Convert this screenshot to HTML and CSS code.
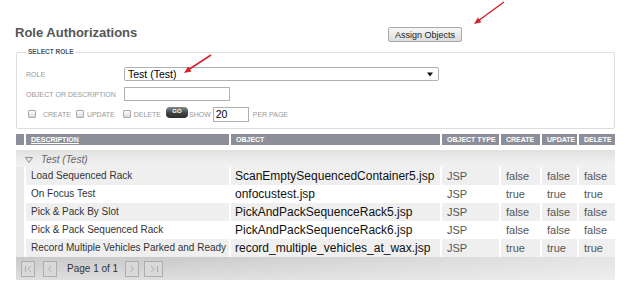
FILE: index.html
```html
<!DOCTYPE html>
<html>
<head>
<meta charset="utf-8">
<title>Role Authorizations</title>
<link rel="stylesheet" href="styles.css">
</head>
<body>
<div class="page">
  <div class="top">
    <h1 class="title">Role Authorizations</h1>
    <button class="btn-assign">Assign Objects</button>
  </div>

  <fieldset class="filter">
    <legend>SELECT ROLE</legend>
    <div class="rows">
      <div class="frow">
        <span class="flabel">ROLE</span>
        <div class="select"><span>Test (Test)</span><svg class="caret" width="6" height="5" viewBox="0 0 6 5"><path d="M0 0.5 H6 L3 4.5 Z" fill="#111"/></svg></div>
      </div>
      <div class="frow">
        <span class="flabel">OBJECT OR DESCRIPTION</span>
        <div class="tinput wide"></div>
      </div>
      <div class="frow opts">
        <span class="cb cb1"></span><span class="olabel l1">CREATE</span>
        <span class="cb cb2"></span><span class="olabel l2">UPDATE</span>
        <span class="cb cb3"></span><span class="olabel l3">DELETE</span>
        <span class="go">GO</span>
        <span class="olabel l4">SHOW</span>
        <div class="tinput num">20</div>
        <span class="olabel l5">PER PAGE</span>
      </div>
    </div>
  </fieldset>

  <div class="tbl">
    <div class="hrow">
      <div></div>
      <div class="u">DESCRIPTION</div>
      <div>OBJECT</div>
      <div>OBJECT TYPE</div>
      <div>CREATE</div>
      <div>UPDATE</div>
      <div>DELETE</div>
    </div>
    <div class="group">
      <svg class="tri" width="8" height="6" viewBox="0 0 8 6"><path d="M0.5 0.5 H7.5 L4 5.5 Z" fill="none" stroke="#8a8a8a" stroke-width="1"/></svg>
      <span>Test (Test)</span>
    </div>
    <div class="drow alt">
      <div class="c0"></div><div class="desc">Load Sequenced Rack</div><div class="obj">ScanEmptySequencedContainer5.jsp</div><div class="sm">JSP</div><div class="sm">false</div><div class="sm">false</div><div class="sm">false</div>
    </div>
    <div class="drow">
      <div class="c0"></div><div class="desc">On Focus Test</div><div class="obj">onfocustest.jsp</div><div class="sm">JSP</div><div class="sm">true</div><div class="sm">true</div><div class="sm">true</div>
    </div>
    <div class="drow alt">
      <div class="c0"></div><div class="desc">Pick &amp; Pack By Slot</div><div class="obj">PickAndPackSequenceRack5.jsp</div><div class="sm">JSP</div><div class="sm">false</div><div class="sm">false</div><div class="sm">false</div>
    </div>
    <div class="drow">
      <div class="c0"></div><div class="desc">Pick &amp; Pack Sequenced Rack</div><div class="obj">PickAndPackSequenceRack6.jsp</div><div class="sm">JSP</div><div class="sm">false</div><div class="sm">false</div><div class="sm">false</div>
    </div>
    <div class="drow alt">
      <div class="c0"></div><div class="desc">Record Multiple Vehicles Parked and Ready</div><div class="obj">record_multiple_vehicles_at_wax.jsp</div><div class="sm">JSP</div><div class="sm">true</div><div class="sm">true</div><div class="sm">true</div>
    </div>
  </div>

  <div class="pager">
    <span class="pbtn p1"><svg width="12" height="14" viewBox="0 0 12 14"><path d="M3.5 4 V10 M9 4 L6 7 L9 10" fill="none" stroke="#acacac" stroke-width="1"/></svg></span>
    <span class="pbtn p2"><svg width="12" height="14" viewBox="0 0 12 14"><path d="M7.5 4 L4.5 7 L7.5 10" fill="none" stroke="#acacac" stroke-width="1"/></svg></span>
    <span class="ptext">Page 1 of 1</span>
    <span class="pbtn p3"><svg width="12" height="14" viewBox="0 0 12 14"><path d="M4.5 4 L7.5 7 L4.5 10" fill="none" stroke="#acacac" stroke-width="1"/></svg></span>
    <span class="pbtn p4"><svg width="16" height="14" viewBox="0 0 16 14"><path d="M5 4 L8 7 L5 10 M11.5 4 V10" fill="none" stroke="#acacac" stroke-width="1"/></svg></span>
  </div>
</div>

<svg class="annot" width="628" height="296" viewBox="0 0 628 296">
  <line x1="504" y1="2" x2="478" y2="21" stroke="#d3232a" stroke-width="1.5"/>
  <polygon points="474,24 481.4,22.3 477.9,17.5" fill="#d3232a"/>
  <line x1="211" y1="55" x2="188" y2="70" stroke="#d3232a" stroke-width="1.5"/>
  <polygon points="184,73 191.5,71.6 188.1,66.6" fill="#d3232a"/>
</svg>
</body>
</html>
```

FILE: styles.css
```css
* { box-sizing: border-box; }

body {
  margin: 0;
  font-family: "Liberation Sans", Arial, sans-serif;
  background: #fff;
  color: #333;
}

.page {
  width: 615px;
  padding-left: 16px;
}

.top {
  display: grid;
  grid-template-columns: 372px auto;
  align-items: start;
  height: 41px;
  padding-top: 25px;
}

.title {
  margin: 0 0 0 -1px;
  font-size: 13px;
  font-weight: bold;
  line-height: 15px;
  color: #555;
}

.btn-assign {
  margin-top: 2px;
  width: 74px;
  height: 15px;
  padding: 0;
  font-family: "Liberation Sans", Arial, sans-serif;
  font-size: 9px;
  color: #222;
  border: 1px solid #a8a8a8;
  border-radius: 2px;
  background: linear-gradient(#f7f7f7, #dcdcdc);
}

/* filter fieldset */
.filter {
  margin: 7px 0 0;
  padding: 0 0 4px 9px;
  width: 599px;
  min-width: 0;
  border: 1px solid #dddddd;
  border-radius: 2px;
}

.filter legend {
  padding: 0 2px;
  font-size: 6.5px;
  line-height: 8px;
  font-weight: bold;
  color: #4a5866;
}

.rows {
  margin-top: 8px;
}

.frow {
  display: flex;
  align-items: center;
  height: 20px;
}

.flabel {
  width: 98px;
  font-size: 7px;
  color: #999;
}

.select {
  width: 315px;
  height: 14px;
  border: 1px solid #b0b0b0;
  border-radius: 2px;
  display: flex;
  align-items: center;
  justify-content: space-between;
  padding: 0 5px 0 3px;
  font-size: 10.5px;
  color: #000;
  background: #fff;
}

.tinput {
  height: 14px;
  border: 1px solid #b0b0b0;
  background: #fff;
}

.tinput.wide {
  width: 106px;
}

.tinput.num {
  width: 36px;
  height: 15px;
  margin-left: 2px;
  font-size: 10.5px;
  line-height: 13px;
  padding-left: 2px;
  color: #000;
}

.cb {
  width: 8px;
  height: 8px;
  border: 1px solid #a9a9a9;
  border-radius: 1px;
  background: linear-gradient(#ffffff, #d9d9d9);
}

.cb1 { margin-left: 2px; }
.cb2 { margin-left: 5px; }
.cb3 { margin-left: 8px; }

.olabel {
  font-size: 7px;
  color: #999;
  white-space: nowrap;
}

.l1 { margin-left: 7px; }
.l2 { margin-left: 3px; }
.l3 { margin-left: 3px; }
.l4 { margin-left: 1px; }
.l5 { margin-left: 4px; }

.go {
  margin-left: 5px;
  width: 22px;
  height: 11px;
  margin-top: -4px;
  border-radius: 4px;
  background: linear-gradient(#8a8a8a, #3e3e3e 60%, #2e2e2e);
  color: #fff;
  font-size: 6px;
  font-weight: bold;
  line-height: 8px;
  text-align: center;
}

/* table */
.tbl {
  margin-top: 5px;
  width: 599px;
}

.hrow,
.drow {
  display: grid;
  grid-template-columns: 8px 203px 209px 57px 39px 35px 36px;
  column-gap: 2px;
}

.hrow {
  height: 11px;
}

.hrow > div {
  background: #8c8f99;
  color: #fff;
  font-size: 7px;
  font-weight: bold;
  line-height: 11px;
  padding-left: 5px;
  white-space: nowrap;
  overflow: hidden;
}

.hrow .u {
  text-decoration: underline;
}

.group {
  margin-top: 5px;
  height: 17px;
  display: flex;
  align-items: center;
  padding: 2px 0 0 9px;
  background: linear-gradient(#e1e1e1, #f3f3f3);
  font-size: 10px;
  font-style: italic;
  color: #666;
}

.tri {
  margin-right: 8px;
}

.drow {
  height: 18px;
}

.drow > div {
  line-height: 18px;
  white-space: nowrap;
  overflow: hidden;
  background: #fff;
}

.drow.alt > div {
  background: #efefef;
}

.drow > .c0,
.drow.alt > .c0 {
  background: #e9e9e9;
}

.desc {
  font-size: 10px;
  color: #333;
  padding-left: 5px;
}

.obj {
  font-size: 12px;
  color: #111;
  padding-left: 4px;
}

.sm {
  font-size: 11px;
  color: #555;
  padding-left: 5px;
}

/* pager */
.pager {
  width: 599px;
  height: 23px;
  display: flex;
  align-items: center;
  padding-left: 5px;
  background:
    linear-gradient(to right, rgba(255,255,255,0) 25%, rgba(255,255,255,0.5) 100%),
    linear-gradient(#cacaca, #dedede);
}

.pbtn {
  display: flex;
  align-items: center;
  justify-content: center;
  width: 14px;
  height: 16px;
  border: 1px solid #adadad;
  background: #d9d9d9;
}

.p2 { margin-left: 8px; }
.p3 { margin-left: 7px; }
.p4 { margin-left: 5px; width: 19px; }

.ptext {
  margin-left: 10px;
  font-size: 10px;
  color: #333;
}

.annot {
  position: absolute;
  left: 0;
  top: 0;
  pointer-events: none;
}
```
